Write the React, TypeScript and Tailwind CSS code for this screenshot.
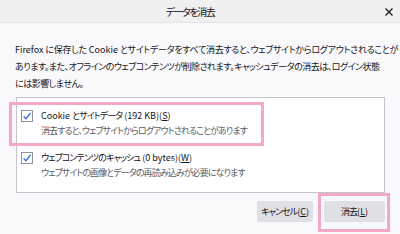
import React from 'react';

const jp = "font-['Segoe_UI','Noto_Sans_CJK_JP',sans-serif] [font-feature-settings:'palt']";

// Latin runs (with the spaces round them) keep normal spacing, Japanese runs are set tighter
const Jp = ({ text }: { text: string }) => (
  <>
    {text.split(/( ?[A-Za-z0-9().]+(?: [A-Za-z0-9().]+)* ?)/).map((part, i) =>
      /[A-Za-z0-9]/.test(part) ? (
        <span key={i} className="tracking-[0px]">
          {part}
        </span>
      ) : (
        <span key={i}>{part}</span>
      )
    )}
  </>
);

const Key = ({ k }: { k: string }) => (
  <span className="tracking-[0px]">
    (<span className="underline">{k}</span>)
  </span>
);

const Check = () => (
  <span className="flex h-[12px] w-[12px] shrink-0 items-center justify-center border border-[#8f8f9d] bg-white">
    <svg width="10" height="10" viewBox="0 0 10 10">
      <path d="M1.6 5.4 L3.9 7.7 L8.6 1.8" fill="none" stroke="#2a6bd6" strokeWidth="1.3" />
    </svg>
  </span>
);

interface Item {
  label: string;
  key: string;
  note: string;
}

const items: Item[] = [
  { label: 'Cookie とサイトデータ (192 KB)', key: 'S', note: '消去すると、ウェブサイトからログアウトされることがあります' },
  { label: 'ウェブコンテンツのキャッシュ (0 bytes)', key: 'W', note: 'ウェブサイトの画像とデータの再読み込みが必要になります' },
];

const App = () => {
  return (
    <div className={`relative flex h-[234px] w-[400px] flex-col overflow-hidden bg-[#f9f9fb] text-[#15141a] ${jp}`}>
      {/* Title bar */}
      <div className="relative flex h-[23px] shrink-0 items-center justify-center border-b border-[#e3e3e8] bg-[#f0f0f0] pr-[20px]">
        <span className="text-[10px] tracking-[-1.4px]">データを消去</span>
        <svg className="absolute right-[7px] top-[8px]" width="8" height="8" viewBox="0 0 8 8">
          <path d="M0.5 0.5 L7.5 7.5 M7.5 0.5 L0.5 7.5" stroke="#1a1a1a" strokeWidth="1.3" />
        </svg>
      </div>

      {/* Description */}
      <p className="ml-[15px] mt-[18px] whitespace-nowrap text-[9px] leading-[17px] tracking-[-0.5px]">
        <span className="tracking-[-0.3px]">
          <Jp text="Firefox に保存した Cookie とサイトデータをすべて消去すると、ウェブサイトからログアウトされることが" />
        </span>
        <br />
        <Jp text="あります。また、オフラインのウェブコンテンツが削除されます。キャッシュデータの消去は、ログイン状態" />
        <br />
        <Jp text="には影響しません。" />
      </p>

      {/* Options */}
      <div className="ml-[16px] mt-[5px] flex h-[96px] w-[369px] flex-col gap-[12px] border border-[#c4c4cc] bg-white pl-[4px] pt-[10px]">
        {items.map((item) => (
          <div key={item.key} className="flex flex-col">
            <div className="flex items-center gap-[8px]">
              <Check />
              <span className="whitespace-nowrap text-[9px] leading-[15px] tracking-[-0.9px]">
                <Jp text={item.label} />
                <Key k={item.key} />
              </span>
            </div>
            <span className="whitespace-nowrap pl-[20px] text-[9px] leading-[15px] tracking-[-0.9px] text-[#5b5b66]">
              {item.note}
            </span>
          </div>
        ))}
      </div>

      {/* Buttons */}
      <div className="mt-[8px] flex justify-end gap-[11px] pr-[15px]">
        <button className="flex h-[21px] w-[56px] items-center justify-center whitespace-nowrap rounded-[2px] bg-[#e0e0e4] text-[9px] tracking-[-0.9px]">
          キャンセル<Key k="C" />
        </button>
        <button className="flex h-[21px] w-[61px] items-center justify-center whitespace-nowrap rounded-[2px] bg-[#e0e0e4] text-[9px] tracking-[-0.9px]">
          消去<Key k="L" />
        </button>
      </div>

      {/* Highlight overlays */}
      <div className="pointer-events-none absolute left-[9px] top-[102px] h-[44px] w-[255px] border-[3px] border-[#f4a8c7]" />
      <div className="pointer-events-none absolute left-[318px] top-[193px] h-[39px] w-[72px] border-[3px] border-[#f4a8c7]" />
    </div>
  );
};

export default App;
